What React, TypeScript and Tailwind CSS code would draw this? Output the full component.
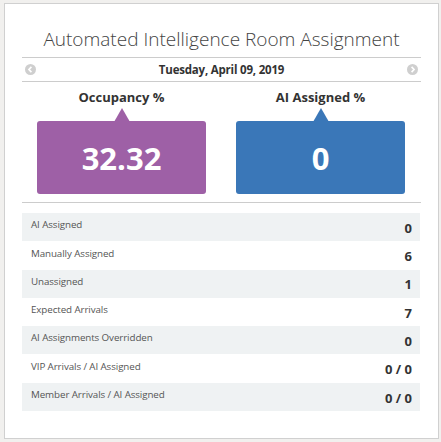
import React from "react";

const rows: [string, string][] = [
  ["AI Assigned", "0"],
  ["Manually Assigned", "6"],
  ["Unassigned", "1"],
  ["Expected Arrivals", "7"],
  ["AI Assignments Overridden", "0"],
  ["VIP Arrivals / AI Assigned", "0 / 0"],
  ["Member Arrivals / AI Assigned", "0 / 0"],
];

function Chevron({ dir }: { dir: "left" | "right" }) {
  return (
    <svg width="11" height="11" viewBox="0 0 12 12">
      <circle cx="6" cy="6" r="6" fill="#cfcfcf" />
      {dir === "left" ? (
        <path d="M7 3.2 L4.3 6 L7 8.8" stroke="#fff" strokeWidth="1.8" fill="none" />
      ) : (
        <path d="M5 3.2 L7.7 6 L5 8.8" stroke="#fff" strokeWidth="1.8" fill="none" />
      )}
    </svg>
  );
}

function Stat({ label, value, color }: { label: string; value: string; color: string }) {
  return (
    <div className="flex flex-col items-center w-[169px]">
      <div className="text-[13px] font-bold text-[#333] leading-[16px] h-[16px]">{label}</div>
      <div className="relative mt-[16px] w-full">
        <div
          className="absolute left-1/2 -translate-x-1/2 -top-[13px] w-0 h-0 border-l-[8px] border-r-[8px] border-b-[14px] border-l-transparent border-r-transparent"
          style={{ borderBottomColor: color }}
        />
        <div
          className="h-[73px] rounded-[3px] flex items-center justify-center text-white font-bold text-[31px]"
          style={{ backgroundColor: color }}
        >
          <span className="mt-[2px]">{value}</span>
        </div>
      </div>
    </div>
  );
}

export default function App() {
  return (
    <div className="w-[441px] h-[442px] bg-[#f1f0ee] pt-[3px] pl-[4px]" style={{ fontFamily: '"Open Sans", "Noto Sans", sans-serif' }}>
      <div className="w-[435px] h-[436px] bg-white border border-[#d0d0d0] px-[17px]">
        <div className="text-center text-[19px] text-[#444] font-light pt-[20px] h-[53px] leading-[30px]">
          Automated Intelligence Room Assignment
        </div>
        <div className="border-t border-b border-[#cccccc] h-[25px] flex items-center justify-between px-[3px]">
          <Chevron dir="left" />
          <div className="text-[11.5px] font-bold text-[#333]" style={{ letterSpacing: "-0.2px" }}>Tuesday, April 09, 2019</div>
          <Chevron dir="right" />
        </div>
        <div className="flex justify-between pl-[15px] pr-[16px] pt-[7px]">
          <Stat label="Occupancy %" value="32.32" color="#9e60a6" />
          <Stat label="AI Assigned %" value="0" color="#3a77b8" />
        </div>
        <div className="border-t border-[#cccccc] mt-[8px]" />
        <div className="mt-[10px] mr-[1px]">
          {rows.map(([label, value], i) => (
            <div
              key={label}
              className={`flex items-center justify-between h-[28.3px] pl-[9px] pr-[8px] ${i % 2 === 0 ? "bg-[#eff2f3]" : "bg-white"}`}
            >
              <span className="text-[9.8px] text-[#555] mt-[-3px]" style={{ letterSpacing: "-0.1px" }}>{label}</span>
              <span className="text-[13px] font-bold text-[#333] mt-[3px]">{value}</span>
            </div>
          ))}
        </div>
      </div>
    </div>
  );
}
